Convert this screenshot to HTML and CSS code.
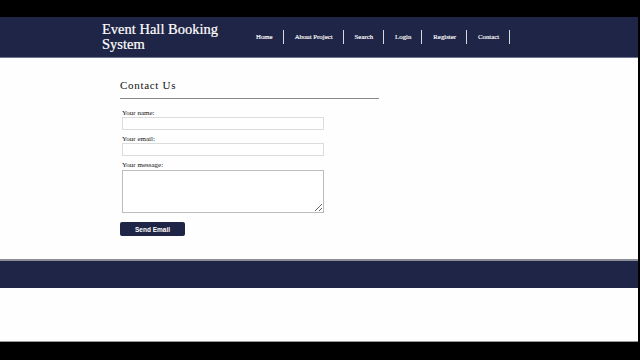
FILE: index.html
```html
<!DOCTYPE html>
<html>
<head>
<meta charset="utf-8">
<link rel="stylesheet" href="styles.css">
</head>
<body>
<div class="frame">
  <div class="page">
    <header class="header">
      <div class="brand">Event Hall Booking<br>System</div>
      <nav class="nav">
        <span class="nav-item">Home</span>
        <span class="nav-item">About Project</span>
        <span class="nav-item">Search</span>
        <span class="nav-item">Login</span>
        <span class="nav-item">Register</span>
        <span class="nav-item">Contact</span>
      </nav>
    </header>
    <main class="main">
      <section class="contact">
        <h2 class="title">Contact Us</h2>
        <form class="form">
          <label class="label">Your name:</label>
          <input class="field" type="text">
          <label class="label">Your email:</label>
          <input class="field" type="text">
          <label class="label">Your message:</label>
          <textarea class="field area"></textarea>
          <button class="btn" type="button">Send Email</button>
        </form>
      </section>
    </main>
    <footer class="footer"></footer>
    <div class="bottom"></div>
  </div>
</div>
</body>
</html>
```

FILE: styles.css
```css
html, body {
  margin: 0;
  padding: 0;
  background: #000;
  height: 360px;
  overflow: hidden;
}
.frame {
  padding-top: 17px;
  width: 638px;
}
.page {
  background: #fdfefd;
  height: 325px;
  display: flex;
  flex-direction: column;
  font-family: "Liberation Serif", "Times New Roman", serif;
}
.header {
  background: #1f2547;
  height: 41px;
  border-bottom: 1px solid #6f7590;
  display: flex;
  align-items: center;
  padding-left: 102px;
  box-sizing: border-box;
}
.brand {
  color: #fff;
  font-size: 14.5px;
  line-height: 15px;
  width: 150px;
  -webkit-text-stroke: 0.2px #fff;
}
.nav {
  display: flex;
  align-items: center;
}
.nav-item {
  color: #fff;
  font-size: 6.8px;
  padding: 0 10px 0 11px;
  line-height: 14px;
  border-right: 1.2px solid #d8d9e0;
  -webkit-text-stroke: 0.15px #fff;
}
.nav-item:first-child { padding-left: 4px; }
.main {
  height: 201px;
  padding-left: 120px;
  box-sizing: border-box;
}
.contact {
  width: 259px;
}
.title {
  margin: 0;
  padding-top: 21px;
  height: 41px;
  box-sizing: border-box;
  font-weight: normal;
  font-size: 11px;
  line-height: 13px;
  letter-spacing: 0.7px;
  color: #111;
  border-bottom: 1px solid #8a8a8a;
}
.form {
  display: flex;
  flex-direction: column;
  align-items: flex-start;
  padding-left: 2px;
  padding-top: 10px;
}
.label {
  font-size: 7px;
  line-height: 8px;
  color: #111;
  margin-bottom: 0;
}
.field {
  width: 202px;
  height: 13px;
  box-sizing: border-box;
  border: 1px solid #dcdcdc;
  background: #fff;
  margin: 0 0 5px 0;
  padding: 0;
}
.area {
  height: 43px;
  resize: vertical;
  border-color: #bdbdbd;
  margin-top: 1px;
  margin-bottom: 9px;
}
.btn {
  margin-left: -2px;
  width: 65px;
  height: 14px;
  background: #1f2547;
  color: #fff;
  border: none;
  border-radius: 2px;
  font-family: "Liberation Sans", Arial, sans-serif;
  font-weight: bold;
  font-size: 6.5px;
  padding: 0;
}
.footer {
  background: #1f2547;
  height: 29px;
  border-top: 2px solid #8c8d96;
  box-sizing: border-box;
}
.bottom {
  flex: 1;
  border-bottom: 1px solid #999;
}
```
